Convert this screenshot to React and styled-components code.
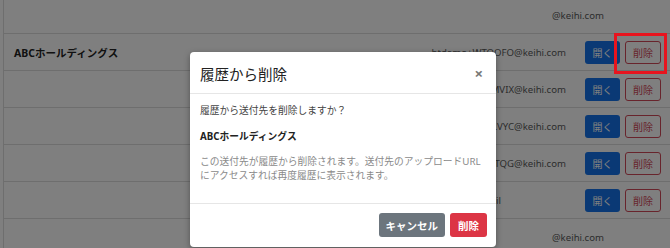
import React from 'react'
import styled, { createGlobalStyle } from 'styled-components';

const GlobalStyle = createGlobalStyle`
    html, body {
        margin: 0;
        padding: 0;
        background: #ffffff;
        font-family: "Noto Sans", "Noto Sans CJK JP", sans-serif;
    }
    * {
        box-sizing: border-box;
    }
`;

const Page = styled.div`
    position: relative;
    width: 670px;
    height: 248px;
    overflow: hidden;
`;
const List = styled.div`
    margin: -3px 0 0 3px;
    border-left: 1px solid #dcdcdc;
`;
const Row = styled.div`
    height: 37px;
    display: flex;
    align-items: center;
    padding: 0 9px 0 10px;
    border-bottom: 1px solid #dcdcdc;
`;
const Name = styled.div`
    flex: 1;
    font-size: 10.5px;
    font-weight: 700;
    color: #222;
`;
const Email = styled.div`
    font-size: 9.6px;
    color: #5a5a5a;
    margin-right: ${props => props.end}px;
    white-space: nowrap;
`;
const Actions = styled.div`
    display: flex;
    gap: 5px;
`;
const OpenButton = styled.button`
    width: 35px;
    height: 23px;
    border: none;
    border-radius: 3px;
    background: #1472ea;
    color: #fff;
    font-family: inherit;
    font-size: 10px;
    padding: 0;
`;
const OutlineDelete = styled.button`
    width: 36px;
    height: 23px;
    border: 1px solid #d04858;
    border-radius: 3px;
    background: transparent;
    color: #d04858;
    font-family: inherit;
    font-size: 10px;
    padding: 0;
`;

const Backdrop = styled.div`
    position: absolute;
    inset: 0;
    background: rgba(0, 0, 0, 0.5);
`;
const Modal = styled.div`
    position: absolute;
    left: 190px;
    top: 52px;
    width: 306px;
    height: 195px;
    background: #fff;
    border-radius: 4px;
    box-shadow: 0 2px 6px rgba(0, 0, 0, 0.35);
    display: flex;
    flex-direction: column;
`;
const Header = styled.div`
    height: 42px;
    display: flex;
    align-items: center;
    justify-content: space-between;
    padding: 2px 13px 0 10px;
    border-bottom: 1px solid #e6e6e6;
`;
const Title = styled.div`
    font-size: 14.5px;
    color: #222;
`;
const Close = styled.span`
    font-size: 15px;
    font-weight: 700;
    color: #777;
    line-height: 1;
`;
const Body = styled.div`
    padding: 10px 10px 20px;
    font-size: 9.75px;
    line-height: 14px;
`;
const Question = styled.p`
    margin: 0 0 12px;
    color: #444;
`;
const Company = styled.p`
    margin: 0 0 11px;
    font-weight: 700;
    color: #222;
`;
const Note = styled.p`
    margin: 0;
    color: #8a8a8a;
`;
const Footer = styled.div`
    border-top: 1px solid #e6e6e6;
    padding: 9px 9px 10px;
    display: flex;
    justify-content: flex-end;
    gap: 5px;
`;
const FooterButton = styled.button`
    height: 24px;
    padding: 0 ${props => props.pad}px;
    border: none;
    border-radius: 3px;
    background: ${props => props.bg};
    color: #fff;
    font-family: inherit;
    font-size: 10.5px;
    font-weight: 700;
`;
const Highlight = styled.div`
    position: absolute;
    left: 614px;
    top: 33px;
    width: 53px;
    height: 41px;
    border: 3px solid #e8141e;
`;

const rows = [
    { name: '', email: '@keihi.com', end: 57, buttons: false },
    { name: 'ABCホールディングス', email: 'htdemo+WTQOFO@keihi.com', end: 19, buttons: true },
    { name: '', email: 'htdemo+KRMVIX@keihi.com', end: 19, buttons: true },
    { name: '', email: 'htdemo+PLVYC@keihi.com', end: 19, buttons: true },
    { name: '', email: 'htdemo+GHTQG@keihi.com', end: 19, buttons: true },
    { name: '', email: 'htdemo+mail', end: 84, buttons: true },
    { name: '', email: '@keihi.com', end: 57, buttons: false },
];

export default function App() {
    return (
        <Page>
            <GlobalStyle />
            <List>
                {rows.map((r, i) => (
                    <Row key={i}>
                        <Name>{r.name}</Name>
                        <Email end={r.end}>{r.email}</Email>
                        {r.buttons && (
                            <Actions>
                                <OpenButton>開く</OpenButton>
                                <OutlineDelete>削除</OutlineDelete>
                            </Actions>
                        )}
                    </Row>
                ))}
            </List>
            <Backdrop />
            <Modal>
                <Header>
                    <Title>履歴から削除</Title>
                    <Close>×</Close>
                </Header>
                <Body>
                    <Question>履歴から送付先を削除しますか？</Question>
                    <Company>ABCホールディングス</Company>
                    <Note>この送付先が履歴から削除されます。送付先のアップロードURLにアクセスすれば再度履歴に表示されます。</Note>
                </Body>
                <Footer>
                    <FooterButton bg="#6c757d" pad={7}>キャンセル</FooterButton>
                    <FooterButton bg="#dc3545" pad={8}>削除</FooterButton>
                </Footer>
            </Modal>
            <Highlight />
        </Page>
    );
}
